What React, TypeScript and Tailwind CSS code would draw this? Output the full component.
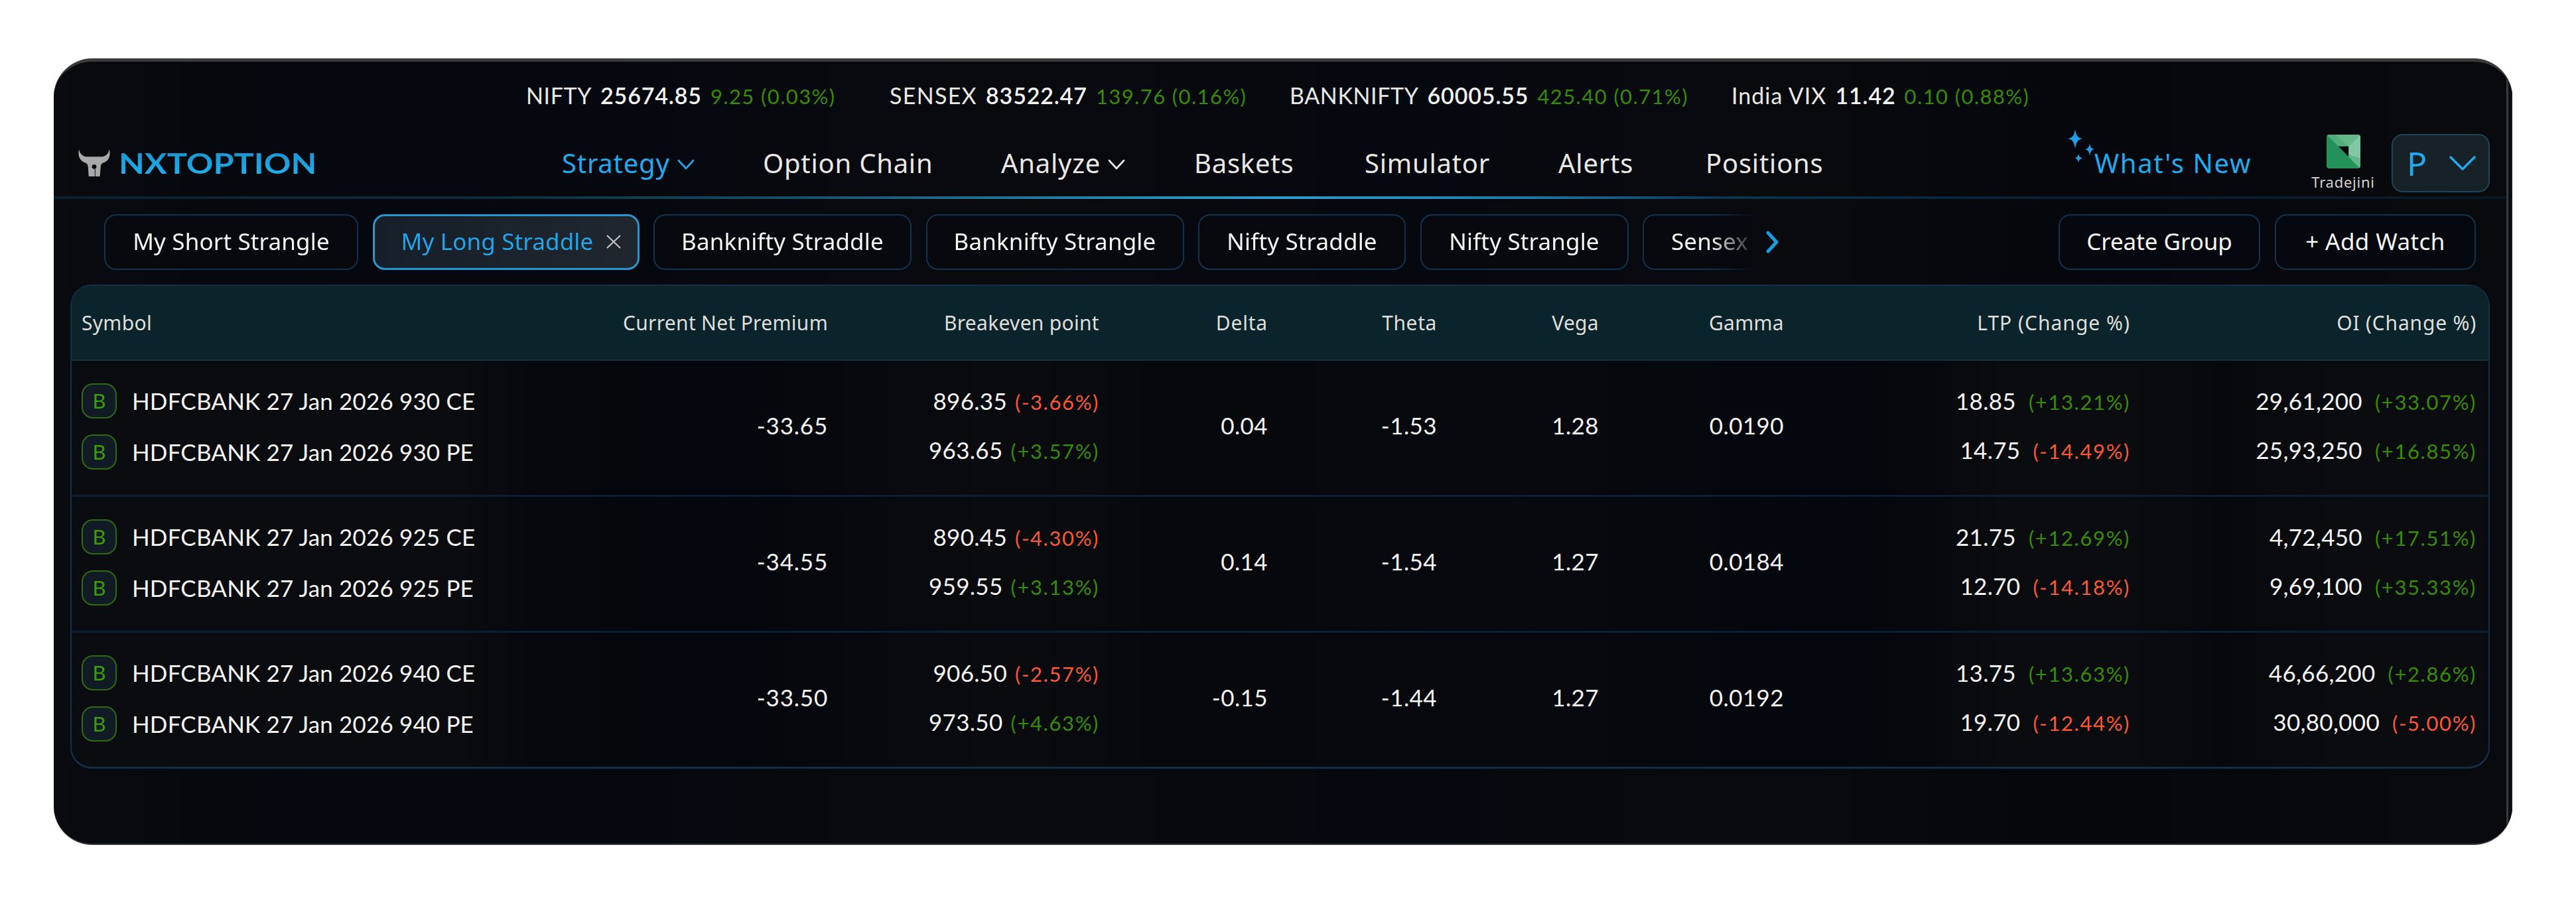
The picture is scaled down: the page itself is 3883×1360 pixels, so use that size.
import clsx from "clsx";

const tickers = [
  { name: "NIFTY", price: "25674.85", change: "9.25 (0.03%)", width: "w-[548px]", tracking: "tracking-[0.6px]" },
  { name: "SENSEX", price: "83522.47", change: "139.76 (0.16%)", width: "w-[603px]", tracking: "tracking-[1.3px]" },
  { name: "BANKNIFTY", price: "60005.55", change: "425.40 (0.71%)", width: "w-[666px]", tracking: "tracking-[0.6px]" },
  { name: "India VIX", price: "11.42", change: "0.10 (0.88%)", width: "w-[500px]", tracking: "tracking-[1px]" },
];

const navItems = [
  { label: "Strategy", width: "w-[303px]", active: true, menu: true },
  { label: "Option Chain", width: "w-[359px]" },
  { label: "Analyze", width: "w-[291px]", menu: true },
  { label: "Baskets", width: "w-[257px]" },
  { label: "Simulator", width: "w-[292px]" },
  { label: "Alerts", width: "w-[222px]" },
  { label: "Positions", width: "w-[586px]" },
];

const tabs = [
  { label: "My Short Strangle", width: "w-[383px]" },
  { label: "My Long Straddle", width: "w-[402px]", active: true },
  { label: "Banknifty Straddle", width: "w-[389px]" },
  { label: "Banknifty Strangle", width: "w-[389px]" },
  { label: "Nifty Straddle", width: "w-[313px]" },
  { label: "Nifty Strangle", width: "w-[314px]" },
];

const rows = [
  {
    symbols: ["HDFCBANK 27 Jan 2026 930 CE", "HDFCBANK 27 Jan 2026 930 PE"],
    premium: "-33.65",
    breakeven: [["896.35", "(-3.66%)"], ["963.65", "(+3.57%)"]],
    greeks: ["0.04", "-1.53", "1.28", "0.0190"],
    ltp: [["18.85", "(+13.21%)"], ["14.75", "(-14.49%)"]],
    oi: [["29,61,200", "(+33.07%)"], ["25,93,250", "(+16.85%)"]],
  },
  {
    symbols: ["HDFCBANK 27 Jan 2026 925 CE", "HDFCBANK 27 Jan 2026 925 PE"],
    premium: "-34.55",
    breakeven: [["890.45", "(-4.30%)"], ["959.55", "(+3.13%)"]],
    greeks: ["0.14", "-1.54", "1.27", "0.0184"],
    ltp: [["21.75", "(+12.69%)"], ["12.70", "(-14.18%)"]],
    oi: [["4,72,450", "(+17.51%)"], ["9,69,100", "(+35.33%)"]],
  },
  {
    symbols: ["HDFCBANK 27 Jan 2026 940 CE", "HDFCBANK 27 Jan 2026 940 PE"],
    premium: "-33.50",
    breakeven: [["906.50", "(-2.57%)"], ["973.50", "(+4.63%)"]],
    greeks: ["-0.15", "-1.44", "1.27", "0.0192"],
    ltp: [["13.75", "(+13.63%)"], ["19.70", "(-12.44%)"]],
    oi: [["46,66,200", "(+2.86%)"], ["30,80,000", "(-5.00%)"]],
  },
];

const columns = "grid grid-cols-[677px_448px_409px_254px_255px_244px_279px_522px_522px] pl-[15px]";

function Chevron({ className }: { className?: string }) {
  return (
    <svg className={className} viewBox="0 0 26 16" fill="none" stroke="currentColor">
      <path d="M2 2l11 12L24 2" strokeWidth={2.6} strokeLinecap="round" strokeLinejoin="round" />
    </svg>
  );
}

function Logo() {
  return (
    <div className="flex w-[729px] items-center">
      <svg className="mr-[13px] h-[41px] w-[48px]" viewBox="0 0 140 120" preserveAspectRatio="none">
        <path
          d="M3 0C7 18 16 29 34 33H106C124 29 133 18 137 0C143 32 134 52 108 61C101 64 99 70 98 80L95 120H46L43 80C42 70 40 64 33 61C7 52 -3 32 3 0Z"
          fill="#a9a9a9"
        />
        <circle cx="70" cy="77" r="10" fill="#07090f" />
        <path d="M74 84v36" stroke="#33363b" strokeWidth={4} />
      </svg>
      <span className="origin-left scale-x-[1.2] bg-gradient-to-b from-[#1a93cd] to-[#1fb2f0] bg-clip-text font-['Lato'] text-[42px] font-bold leading-none text-transparent">
        NXTOPTION
      </span>
    </div>
  );
}

function Sparkles() {
  return (
    <svg className="absolute -left-[41px] -top-[21px] h-[52px] w-[42px]" viewBox="0 0 42 52" fill="#1f9fe2">
      <path d="M12 0C14 10 15 12 23 14C15 16 14 19 12 29C10 19 9 16 1 14C9 12 10 10 12 0Z" />
      <path d="M34 21C35 27 36 29 41 30C36 31 35 34 34 40C33 34 32 31 27 30C32 29 33 27 34 21Z" />
      <path d="M17 37C18 41 19 42 23 43.500C19 45 18 46 17 50C16 46 15 45 12 43.500C15 42 16 41 17 37Z" />
    </svg>
  );
}

function Broker() {
  return (
    <div className="flex w-[96px] flex-col items-center">
      <svg className="h-[51px] w-[51px] rounded-[4px]" viewBox="0 0 100 100">
        <path d="M0 0H100V100H0Z" fill="#23925a" />
        <path d="M0 0H100L65 35H35Z" fill="#52ae7f" />
        <path d="M28 0H100L65 35Z" fill="#64b88c" />
        <path d="M100 0V100L65 65V35Z" fill="#7fc8a4" />
        <path d="M35 35H65V65Z" fill="#05080b" />
        <path d="M100 100L65 65V58L100 70Z" fill="#62b88b" />
      </svg>
      <span className="mt-[6px] text-[22px] leading-[28px] tracking-[0.75px] text-[#d4d3cd]">Tradejini</span>
    </div>
  );
}

function Change({ value }: { value: string }) {
  return (
    <span className={clsx("text-[31px] tracking-[1.6px]", value.startsWith("(-") ? "text-[#fa5836]" : "text-[#378c07]")}>
      {value}
    </span>
  );
}

function Pairs({ values, gap }: { values: string[][]; gap: string }) {
  return (
    <div className="flex flex-col gap-[21px]">
      {values.map(([value, change]) => (
        <div key={value} className={clsx("flex h-[53px] items-baseline justify-end leading-[53px]", gap)}>
          <span className="tracking-[0.3px]">{value}</span>
          <Change value={change} />
        </div>
      ))}
    </div>
  );
}

export default function App() {
  return (
    <main className="h-[1360px] w-[3883px] bg-white pl-[81px] pt-[88px] font-['Noto_Sans',sans-serif] text-[#f5f5f3]">
      <div className="relative h-[1186px] w-[3706px] overflow-hidden rounded-[58px] border-b-2 border-t-[5px] border-b-[#36383b] border-t-[#3b3b3b] bg-[linear-gradient(90deg,#090b0f_0%,#05080d_6%,#05080f_22%,#090a0e_38%,#06080f_55%,#080a0e_70%,#05070c_82%,#090a0e_100%)]">
        {/* Right bezel of the window */}
        <div className="absolute -top-[5px] bottom-0 right-0 w-[9px] border-l-[3px] border-r border-l-[#38393c] border-r-[#222326] bg-[#0c0d10]" />

        {/* Index ticker */}
        <div className="flex h-[102px] items-center pb-px pl-[712px] font-['Lato',sans-serif] text-[34px]">
          {tickers.map((t) => (
            <div key={t.name} className={clsx("flex shrink-0 items-baseline gap-[13px] whitespace-nowrap", t.width)}>
              <span className={clsx("text-[#e9e8e4]", t.tracking)}>{t.name}</span>
              <span className="font-semibold tracking-[0.85px]">{t.price}</span>
              <span className="text-[31px] tracking-[1.4px] text-[#378c07]">{t.change}</span>
            </div>
          ))}
        </div>

        {/* Main navigation */}
        <header className="flex h-[101px] items-center pl-[37px]">
          <Logo />
          <nav className="flex text-[40px] tracking-[0.75px] text-[#e9e8e4]">
            {navItems.map((item) => (
              <a key={item.label} className={clsx("flex shrink-0 items-center gap-[11px] whitespace-nowrap", item.width, item.active && "text-[#22aaee]")}>
                {item.label}
                {item.menu && <Chevron className="mt-[4px] h-[16px] w-[26px]" />}
              </a>
            ))}
          </nav>
          <div className="relative w-[327px] whitespace-nowrap text-[40px] tracking-[1.65px] text-[#22aaee]">
            <Sparkles />
            What's New
          </div>
          <Broker />
          <button className="ml-[25px] flex h-[88px] w-[148px] items-center justify-between rounded-[17px] border-2 border-[#1f4459] bg-[#172128] pl-[21px] pr-[19px] text-[50px] leading-none text-[#22aaee]">
            P
            <svg className="h-[24px] w-[40px]" viewBox="0 0 40 24" fill="none" stroke="currentColor">
              <path d="M2 3l18 18L38 3" strokeWidth={3.5} strokeLinecap="round" strokeLinejoin="round" />
            </svg>
          </button>
        </header>
        <div className="mr-[9px] h-[4px] bg-[linear-gradient(90deg,#0b2130_0%,#0e2a38_17%,#165066_30%,#2789b4_44%,#2f9cce_50%,#1f7aa8_60%,#0d3450_68%,#0a2038_80%,#0b1722_100%)]" />

        {/* Watch groups */}
        <div className="mt-[23px] flex h-[84px] items-center pl-[76px] text-[35px] tracking-[0.15px]">
          <div className="flex h-full w-[2497px] gap-[21.500px] overflow-hidden whitespace-nowrap [mask-image:linear-gradient(90deg,#000_2422px,transparent_2492px)]">
            {tabs.map((tab) => (
              <button
                key={tab.label}
                className={clsx(
                  "flex h-full shrink-0 items-center rounded-[18px] pb-[2px]",
                  tab.width,
                  tab.active
                    ? "justify-between border-[3px] border-[#2797d2] bg-[linear-gradient(90deg,#151f2a,#20262d)] pl-[40px] pr-[24px] text-[#22a6ea]"
                    : "justify-center border-2 border-[#12334f] bg-[#07090f]"
                )}
              >
                {tab.label}
                {tab.active && (
                  <svg className="h-[23px] w-[24px]" viewBox="0 0 24 23" stroke="#c4c5c6" strokeWidth={2.2}>
                    <path d="M2 2l20 19M22 2L2 21" />
                  </svg>
                )}
              </button>
            ))}
            <button className="flex h-full w-[300px] shrink-0 items-center rounded-[18px] border-2 border-[#12334f] bg-[#07090f] pb-[2px] pl-[41px]">
              Sensex
            </button>
          </div>
          <svg className="ml-[7px] h-[34px] w-[22px]" viewBox="0 0 22 34" fill="none">
            <path d="M4 3l13 14L4 31" stroke="#149fe4" strokeWidth={5} strokeLinecap="round" strokeLinejoin="round" />
          </svg>
          <div className="ml-[420px] flex h-full gap-[22px]">
            <button className="flex h-full w-[304px] items-center justify-center rounded-[18px] border-2 border-[#12334f] bg-[#06080f] pb-[2px] tracking-[-0.050px]">
              Create Group
            </button>
            <button className="flex h-full w-[303px] items-center justify-center rounded-[18px] border-2 border-[#12334f] bg-[#06080f] pb-[2px] tracking-[0.4px]">
              + Add Watch
            </button>
          </div>
        </div>

        {/* Positions table */}
        <div className="ml-[25px] mt-[22px] h-[730px] w-[3647px] overflow-hidden rounded-[32px] border-2 border-b-[3px] border-[#132f48] bg-[linear-gradient(90deg,#0b0c10_0%,#0b0c10_16%,#06080d_19%,#04070d_27%,#06080d_31%,#0a0b0f_38%,#0a0b0f_40%,#06080c_45%,#07090e_60%,#04070d_72%,#06080d_77%,#0b0c0f_80%,#0b0c0f_85%,#06080c_89%,#0b0c10_94%)]">
          <div className={clsx(columns, "h-[113px] items-center border-b-2 border-[#143038] bg-[#0b242c] text-right text-[30px] tracking-[0.3px] text-[#dededb]")}>
            <span className="text-left">Symbol</span>
            <span>Current Net Premium</span>
            <span>Breakeven point</span>
            <span className="tracking-[0.8px]">Delta</span>
            <span className="tracking-[0.6px]">Theta</span>
            <span>Vega</span>
            <span>Gamma</span>
            <span className="tracking-[1px]">LTP (Change %)</span>
            <span className="tracking-[0.8px]">OI (Change %)</span>
          </div>
          {rows.map((row) => (
            <div key={row.premium} className={clsx(columns, "h-[205px] border-b-[3px] border-[#0c1e31] pt-[34px] text-right font-['Lato',sans-serif] text-[35px] last:border-0")}>
              <div className="flex flex-col gap-[24px]">
                {row.symbols.map((symbol) => (
                  <div key={symbol} className="flex items-center gap-[23px]">
                    <span className="flex h-[53px] w-[53px] items-center justify-center rounded-[17px] border-2 border-[#2f6a10] bg-[#111b26] text-[31px] leading-none text-[#3d9a0a]">
                      B
                    </span>
                    <span className="leading-[53px] tracking-[0.15px]">{symbol}</span>
                  </div>
                ))}
              </div>
              <span className="leading-[127px] tracking-[0.8px]">{row.premium}</span>
              <Pairs values={row.breakeven} gap="gap-[12px]" />
              {row.greeks.map((greek, i) => (
                <span key={i} className="leading-[127px] tracking-[0.4px]">{greek}</span>
              ))}
              <Pairs values={row.ltp} gap="gap-[19px]" />
              <Pairs values={row.oi} gap="gap-[19px]" />
            </div>
          ))}
        </div>
      </div>
    </main>
  );
}
